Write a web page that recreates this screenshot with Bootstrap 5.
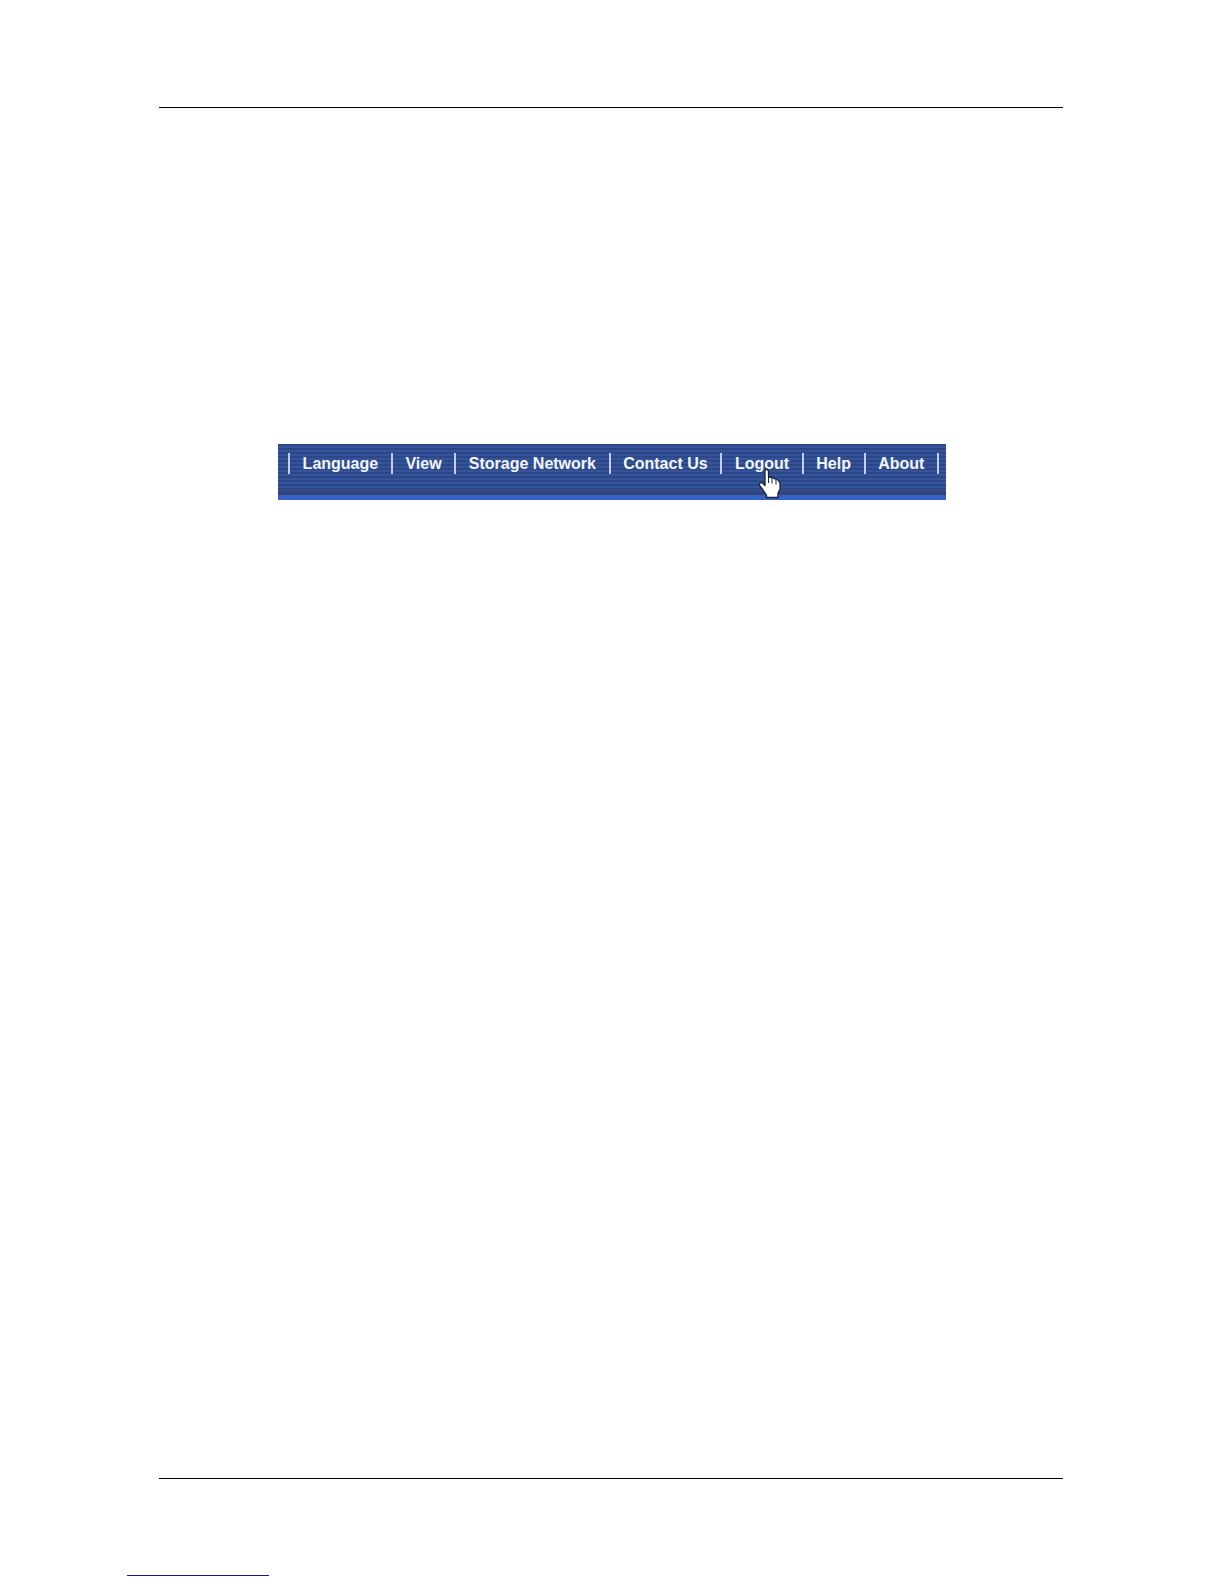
<!DOCTYPE html>
<html lang="en">
<head>
<meta charset="utf-8">
<meta name="viewport" content="width=device-width, initial-scale=1">
<title>Logout</title>
<link href="https://cdn.jsdelivr.net/npm/bootstrap@5.3.0/dist/css/bootstrap.min.css" rel="stylesheet">
<style>
  body { background: #fff; font-family: "Liberation Sans", Arial, sans-serif; }
  .sheet { min-height: 100vh; padding-top: 107px; }
  .rule { border-top: 1px solid #000; margin: 0 161px 0 159px; }
  .figure-area { padding-top: 336px; }
  .menu-bar {
    max-width: 668px;
    height: 56px;
    padding: 9px 7px 0 10px;
    border-bottom: 5px solid #3463c9;
    background:
      linear-gradient(#344472, #344472) bottom / 100% 4px no-repeat,
      repeating-linear-gradient(#2b4788 0 2px, #35549b 2px 4px);
  }
  .menu-item { border-left: 2px solid #c3cff0; height: 21px; line-height: 22px; }
  .menu-item:last-child { border-right: 2px solid #c3cff0; }
  .menu-item a {
    color: #f3f6ff;
    font-size: 16px;
    font-weight: 700;
    white-space: nowrap;
  }
  .hand { left: 36px; top: 15px; width: 24px; height: 31px; pointer-events: none; }
  .foot-gap { height: 96px; }
  .foot-link { border-top: 1px solid #1414a0; width: 142px; margin: 0 0 8px 127px; }
</style>
</head>
<body>
<div class="sheet d-flex flex-column">
  <div class="rule"></div>
  <main class="figure-area flex-grow-1">
    <nav class="menu-bar mx-auto" aria-label="Main menu">
      <ul class="list-unstyled d-flex m-0">
        <li class="menu-item flex-fill text-center"><a class="text-decoration-none" href="#">Language</a></li>
        <li class="menu-item flex-fill text-center"><a class="text-decoration-none" href="#">View</a></li>
        <li class="menu-item flex-fill text-center"><a class="text-decoration-none" href="#">Storage Network</a></li>
        <li class="menu-item flex-fill text-center"><a class="text-decoration-none" href="#">Contact Us</a></li>
        <li class="menu-item flex-fill text-center position-relative">
          <a class="text-decoration-none" href="#">Logout</a>
          <svg class="hand position-absolute" viewBox="0 0 24 31" aria-hidden="true">
            <path d="M7 3L8 1H9L10.500 3V9L14 9.500L17 11L20 12L22 15V21L20 25V29.500H8.500V27L5 22L1.500 17.500V15.500L4 14.500L7 17.500Z" fill="#fff" stroke="#182238" stroke-width="1.300" stroke-linejoin="round"/>
            <path d="M10.500 9V15M14 10V15.500M18 12V16.500" fill="none" stroke="#182238" stroke-width="1"/>
          </svg>
        </li>
        <li class="menu-item flex-fill text-center"><a class="text-decoration-none" href="#">Help</a></li>
        <li class="menu-item flex-fill text-center"><a class="text-decoration-none" href="#">About</a></li>
      </ul>
    </nav>
  </main>
  <footer>
    <div class="rule"></div>
    <div class="foot-gap"></div>
    <div class="foot-link"></div>
  </footer>
</div>
<script src="https://cdn.jsdelivr.net/npm/bootstrap@5.3.0/dist/js/bootstrap.bundle.min.js"></script>
</body>
</html>
